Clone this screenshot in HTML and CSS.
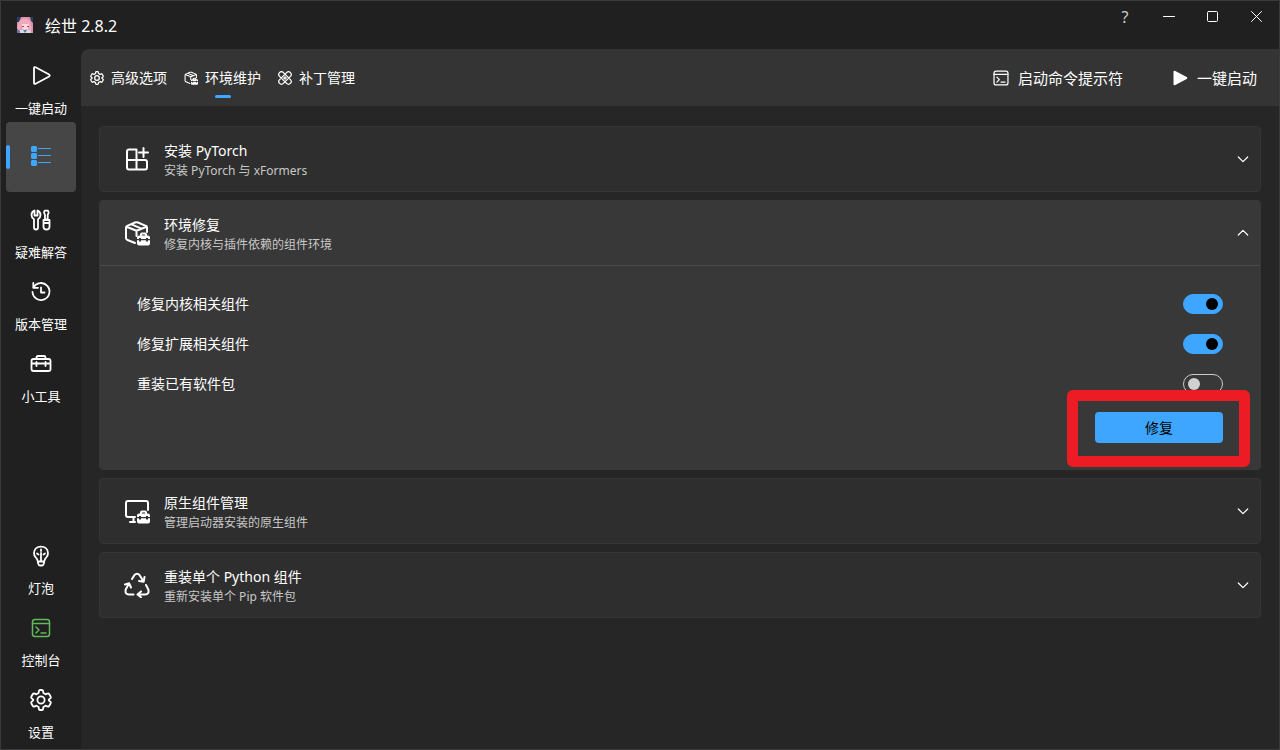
FILE: index.html
```html
<!DOCTYPE html>
<html lang="zh-CN">
<head>
<meta charset="utf-8">
<meta name="viewport" content="width=device-width, initial-scale=1">
<title>绘世 2.8.2</title>
<link rel="stylesheet" href="styles.css">
</head>
<body>
<svg class="sprite" aria-hidden="true">
  <symbol id="i-gear" viewBox="1 1 22 22"><path d="M10 2.700 9.600 5 7.400 6.300 5.200 5.400C4.800 5.200 4.500 5.300 4.200 5.600Q2.900 7.200 2.200 9.100C2.100 9.500 2.200 9.800 2.500 10.100L4.200 11.700V12.300L2.500 13.900C2.200 14.200 2.100 14.500 2.200 14.900Q2.900 16.800 4.200 18.400C4.500 18.700 4.800 18.800 5.200 18.600L7.400 17.700 9.600 19 10 21.300C10.100 21.700 10.300 21.900 10.700 22H13.300C13.700 21.900 13.900 21.700 14 21.300L14.400 19 16.600 17.700 18.800 18.600C19.200 18.800 19.500 18.700 19.800 18.400Q21.100 16.800 21.800 14.900C21.900 14.500 21.800 14.200 21.500 13.900L19.800 12.300V11.700L21.500 10.100C21.800 9.800 21.900 9.500 21.800 9.100Q21.100 7.200 19.800 5.600C19.500 5.300 19.200 5.200 18.800 5.400L16.600 6.300 14.400 5 14 2.700C13.900 2.300 13.700 2.100 13.300 2H10.700C10.300 2.100 10.100 2.300 10 2.700Z"/><circle cx="12" cy="12" r="3.600"/></symbol>
  <symbol id="i-console" viewBox="0 0 22 22"><rect x="2.500" y="2.500" width="17" height="17" rx="2.500"/><path d="M2.500 6.500H19.500M6 10 9 13 6 16M11 16H16"/></symbol>
  <symbol id="i-box" viewBox="0 0 26 26"><path d="M11 23 3.500 20Q2 19.400 2 18V7.500Q2 6.300 3.200 5.800L11 2.500Q12.500 1.900 14 2.500L21.700 5.800Q23 6.300 23 7.500V12M2.500 6.700 12.500 10.800 22.500 6.700M7.500 4.300 17.500 8.600M12.500 10.800V16"/><use href="#i-case"/></symbol>
  <symbol id="i-case" viewBox="0 0 26 26"><path class="solid" d="M13 19V17.500Q13 15.500 15 15.500H16V14.500Q16 12.500 18 12.500H21Q23 12.500 23 14.500V15.500H24Q26 15.500 26 17.500V19H24V18H22V19H17V18H15V19ZM18 15.500H21V14.500H18ZM13 20.200H15V21.500H17V20.200H22V21.500H24V20.200H26V23.500Q26 25.500 24 25.500H15Q13 25.500 13 23.500Z"/></symbol>
  <symbol id="i-down" viewBox="0 0 12 12"><path d="M1.300 4 6 8.700 10.700 4"/></symbol>
</svg>
<div class="window">
  <header class="titlebar">
    <svg class="avatar" viewBox="0 0 16 16" aria-hidden="true"><rect width="16" height="16" fill="#dc8fa5"/><path d="M0 0H4L2 5H0ZM13 0H16V6L14 4Z" fill="#263c69"/><path d="M2 5Q7-2 13 4L15 12 12 14 11 8H5L3 14 0 11Z" fill="#f0a9ba"/><path d="M5 7H12L11 12 8 13 5 11Z" fill="#fbdcd8"/><path d="M5 9H7V10H5ZM10 9H12V10H10Z" fill="#a24766"/><path d="M3 13 7 12 8 14 11 12 14 14V16H3Z" fill="#d9daea"/><path d="M6 13 8 16 10 13ZM0 12 3 14V16H0Z" fill="#6379aa"/></svg>
    <h1 class="app-title">绘世 2.8.2</h1>
    <div class="window-controls">
      <button class="window-button help" aria-label="帮助">?</button>
      <button class="window-button" aria-label="最小化"><svg class="icon-12" viewBox="0 0 12 12"><path d="M.5 5.500H11.500"/></svg></button>
      <button class="window-button" aria-label="最大化"><svg class="icon-12" viewBox="0 0 12 12"><rect x=".5" y=".5" width="10" height="10" rx="1"/></svg></button>
      <button class="window-button" aria-label="关闭"><svg class="icon-12" viewBox="0 0 12 12"><path d="M.5.500 10.500 10.500M10.500.500.500 10.500"/></svg></button>
    </div>
  </header>
  <div class="workspace">
    <nav class="sidebar" aria-label="主导航">
      <div class="nav-group">
        <button class="nav-item"><svg class="icon-22" viewBox="0 0 22 22"><path d="M4 3.200Q4 1.500 5.600 2.300L18.700 9.300Q20.700 10.500 18.700 11.700L5.600 18.700Q4 19.500 4 17.800Z"/></svg><span>一键启动</span></button>
        <button class="nav-item selected" aria-label="高级选项" aria-current="page"><svg class="icon-22" viewBox="0 0 22 22"><path class="solid" d="M2 1H6L7 2V6L6 7H2L1 6V2ZM2 8H6L7 9V13L6 14H2L1 13V9ZM2 15H6L7 16V20L6 21H2L1 20V16Z"/><path d="M8.500 3.500H20.500M8.500 10.500H20.500M8.500 17.500H20.500" stroke-width="1.200"/></svg></button>
        <button class="nav-item"><svg class="icon-22" viewBox="0 0 22 22"><path d="M4.500 1.500V6.500H7.500V1.500Q10.500 2.700 10.500 6 10.500 8.700 8 10.300V18.500Q8 20.500 6 20.500T4 18.500V10.300Q1.500 8.700 1.500 6 1.500 2.700 4.500 1.500ZM14.700 1.700H18L18.700 3.500 17.700 6V10.500H15V6L14 3.500ZM13.500 11H19.500V17.700Q19.500 20.500 16.500 20.500T13.500 17.700ZM13.500 14H19.500"/></svg><span>疑难解答</span></button>
        <button class="nav-item"><svg class="icon-22" viewBox="0 0 22 22"><path d="M3.500 6.500A8.500 8.500 0 1 1 2.500 11M3.300 2V6.800H8M11 6.500V11.500H14.500"/></svg><span>版本管理</span></button>
        <button class="nav-item"><svg class="icon-22" viewBox="0 0 22 22"><path d="M6.500 6V4.500Q6.500 3 8 3H14Q15.500 3 15.500 4.500V6M3.500 6H18.500Q20.500 6 20.500 8V16Q20.500 18 18.500 18H3.500Q1.500 18 1.500 16V8Q1.500 6 3.500 6ZM1.500 10.500H20.500M6.500 9V13M15.500 9V13"/></svg><span>小工具</span></button>
      </div>
      <div class="nav-group">
        <button class="nav-item"><svg class="icon-22" viewBox="0 0 22 22"><path d="M7.700 16Q7.300 13.800 5.700 12.300 4 10.600 4 8.300C4 4.300 7 1.700 11 1.700S18 4.300 18 8.300Q18 10.600 16.300 12.300 14.700 13.800 14.300 16L13.800 18.700Q13.500 20.500 12 20.500H10Q8.500 20.500 8.200 18.700ZM7.900 16.500H14.100M11 8V16M11 4.500V6M7 8.500 8.500 9.500M15 8.500 13.500 9.500"/></svg><span>灯泡</span></button>
        <button class="nav-item"><svg class="icon-22 thin green"><use href="#i-console"/></svg><span>控制台</span></button>
        <button class="nav-item"><svg class="icon-22"><use href="#i-gear"/></svg><span>设置</span></button>
      </div>
    </nav>
    <main class="content">
      <div class="toolbar">
        <nav class="tabs" aria-label="页面">
          <button class="tab"><svg class="icon-14"><use href="#i-gear"/></svg>高级选项</button>
          <button class="tab active" aria-current="page"><svg class="icon-14"><use href="#i-box"/></svg>环境维护</button>
          <button class="tab"><svg class="icon-14" viewBox="1 1 22 22"><path d="M3.500 3.500Q6.500.500 9.500 3.500L20.500 14.500Q23.500 17.500 20.500 20.500T14.500 20.500L3.500 9.500Q.500 6.500 3.500 3.500ZM14.500 3.500Q17.500.500 20.500 3.500T20.500 9.500L9.500 20.500Q6.500 23.500 3.500 20.500T3.500 14.500ZM10 12H14M12 10V14"/></svg>补丁管理</button>
        </nav>
        <div class="actions">
          <button class="action"><svg class="icon-18 thin"><use href="#i-console"/></svg>启动命令提示符</button>
          <button class="action"><svg class="icon-18" viewBox="0 0 18 18"><path class="solid" d="M2.500 3Q2.500 1 4.300 2L15.700 8Q17.300 9 15.700 10L4.300 16Q2.500 17 2.500 15Z"/></svg>一键启动</button>
        </div>
      </div>
      <div class="cards">
        <details class="card">
          <summary class="card-head">
            <svg class="icon-26" viewBox="0 0 26 26"><path d="M12.500 3.500H5Q3 3.500 3 5.500V21.500Q3 23.500 5 23.500H21Q23 23.500 23 21.500V16Q23 14 21 14H12.500ZM3 14H12.500V23.500M12.500 3.500V14M19.500 2V11M15 6.500H24"/></svg>
            <span class="card-text"><span class="card-title">安装 PyTorch</span><span class="card-sub">安装 PyTorch 与 xFormers</span></span>
            <svg class="chevron"><use href="#i-down"/></svg>
          </summary>
        </details>
        <details class="card" open>
          <summary class="card-head">
            <svg class="icon-26"><use href="#i-box"/></svg>
            <span class="card-text"><span class="card-title">环境修复</span><span class="card-sub">修复内核与插件依赖的组件环境</span></span>
            <svg class="chevron"><use href="#i-down"/></svg>
          </summary>
          <div class="card-body">
            <label class="option">修复内核相关组件<input class="switch" type="checkbox" role="switch" checked></label>
            <label class="option">修复扩展相关组件<input class="switch" type="checkbox" role="switch" checked></label>
            <label class="option">重装已有软件包<input class="switch" type="checkbox" role="switch"></label>
            <div class="submit"><button class="primary">修复</button><div class="highlight"></div></div>
          </div>
        </details>
        <details class="card">
          <summary class="card-head">
            <svg class="icon-26" viewBox="0 0 26 26"><path d="M11 19H4Q2 19 2 17V5Q2 3 4 3H22Q24 3 24 5V12M9.500 19V24M6 24H11"/><use href="#i-case"/></svg>
            <span class="card-text"><span class="card-title">原生组件管理</span><span class="card-sub">管理启动器安装的原生组件</span></span>
            <svg class="chevron"><use href="#i-down"/></svg>
          </summary>
        </details>
        <details class="card">
          <summary class="card-head">
            <svg class="icon-26" viewBox="0 0 26 26"><path d="M8 7 10.500 3Q13 .300 15.500 3L19.500 9.500M20.500 5 19.700 9.700 15 9M22 13 24.300 17.500Q25.500 22.500 21 22.500H14M17 19.500 13.500 22.500 17 25.200M9.500 22.500H5Q.700 22.500 1.700 17.500L5 11.500M1 12.500 5.200 11.300 7 15.500"/></svg>
            <span class="card-text"><span class="card-title">重装单个 Python 组件</span><span class="card-sub">重新安装单个 Pip 软件包</span></span>
            <svg class="chevron"><use href="#i-down"/></svg>
          </summary>
        </details>
      </div>
    </main>
  </div>
</div>
</body>
</html>
```
FILE: styles.css
```css
* { box-sizing: border-box; }
body {
  margin: 0;
  background: #202020;
  color: #fff;
  font: 14px/20px "Noto Sans", "Noto Sans CJK SC", sans-serif;
}
button { margin: 0; padding: 0; border: 0; background: none; color: inherit; font: inherit; }
svg { display: block; flex: none; fill: none; stroke: currentColor; stroke-width: 2; stroke-linecap: round; stroke-linejoin: round; }
.sprite { position: absolute; width: 0; height: 0; }
.solid { fill: currentColor; stroke: none; fill-rule: evenodd; }
.icon-12 { width: 12px; height: 12px; stroke-width: 1; }
.icon-14 { width: 14px; height: 14px; }
.icon-18 { width: 18px; height: 18px; }
.icon-22 { width: 22px; height: 22px; stroke-width: 1.8; }
.icon-26 { width: 26px; height: 26px; stroke-width: 2; }
.thin { stroke-width: 1.5; }
.green { color: #5fb95a; }

.window { display: flex; flex-direction: column; min-height: 100vh; border: 1px solid #3a3a3a; }
.titlebar { display: flex; align-items: center; height: 48px; padding-left: 16px; }
.avatar { width: 16px; height: 16px; stroke: none; }
.app-title { margin: 0 0 0 12px; padding-top: 2px; font-size: 16px; font-weight: 400; line-height: 24px; }
.window-controls { display: flex; align-self: flex-start; margin-left: auto; }
.window-button { display: flex; align-items: center; justify-content: center; width: 44px; height: 32px; }
.help { color: #ccc; font-size: 16px; }

.workspace { display: flex; flex: 1; }
.sidebar { display: flex; flex-direction: column; justify-content: space-between; width: 80px; padding: 1px 4px 5px 5px; }
.nav-group { display: flex; flex-direction: column; gap: 2px; }
.nav-item { display: flex; flex-direction: column; align-items: center; gap: 11px; width: 70px; height: 70px; padding-top: 15px; border-radius: 4px; font-size: 13px; white-space: nowrap; }
.selected { position: relative; justify-content: center; padding: 0 0 2px; background: #464646; color: #3ea6ff; }
.selected::before { content: ""; position: absolute; left: 0; top: 23px; width: 4px; height: 24px; border-radius: 2px; background: #3ea6ff; }

.content { flex: 1; min-width: 0; border-radius: 8px 0 0; background: #262626; overflow: hidden; }
.toolbar { display: flex; align-items: center; justify-content: space-between; height: 57px; padding: 0 22px 0 9px; background: #343434; }
.tabs { display: flex; gap: 17px; }
.tab { display: flex; align-items: center; gap: 7px; height: 44px; }
.active { position: relative; }
.active::after { content: ""; position: absolute; bottom: 2px; left: 50%; width: 16px; height: 3px; margin-left: -8px; border-radius: 2px; background: #3ea6ff; }
.actions { display: flex; gap: 48px; }
.action { display: flex; align-items: center; gap: 8px; font-size: 15px; }

.cards { display: flex; flex-direction: column; gap: 8px; padding: 20px 18px; }
.card { border: 1px solid #353535; border-radius: 4px; background: #2e2e2e; }
.card[open] { border-color: #383838; background: #383838; }
.card-head { display: flex; align-items: center; height: 64px; padding: 0 11px 0 24px; list-style: none; }
.card[open] .card-head { height: 65px; border-bottom: 1px solid #4a4a4a; }
.card-text { display: flex; flex-direction: column; flex: 1; padding: 3px 0 0 14px; }
.card-sub { color: #c8c8c8; font-size: 12px; }
.chevron { width: 12px; height: 12px; stroke-width: 1.2; }
.card[open] .chevron { transform: rotate(180deg); }
.card-body { padding: 18px 37px 26px; }
.option { display: flex; align-items: center; justify-content: space-between; height: 40px; }
.switch { appearance: none; display: flex; align-items: center; width: 40px; height: 20px; margin: 0; padding: 0 4px; border: 1px solid #ccc; border-radius: 10px; }
.switch::before { content: ""; width: 12px; height: 12px; border-radius: 50%; background: #d0d0d0; }
.switch:checked { justify-content: flex-end; border-color: #3ea6ff; background: #3ea6ff; }
.switch:checked::before { background: #000; }
.submit { position: relative; width: 128px; margin: 8px 0 0 auto; }
.primary { display: block; width: 100%; height: 31px; border-radius: 4px; background: #3ea6ff; color: #000; }
.highlight { position: absolute; inset: -22px -27px -24px -28px; border: 11px solid #ed1c24; border-radius: 6px; pointer-events: none; }
```
